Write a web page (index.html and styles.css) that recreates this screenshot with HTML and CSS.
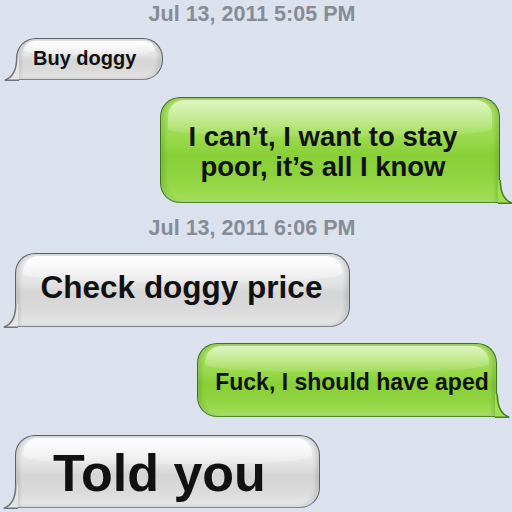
FILE: index.html
```html
<!DOCTYPE html>
<html>
<head>
<meta charset="utf-8">
<link rel="stylesheet" href="styles.css">
</head>
<body>
<div class="thread">
  <div class="stamp">Jul 13, 2011 5:05 PM</div>

  <div class="bubble gray b1">
    <span class="txt">Buy doggy</span>
    <svg class="tail tail-left" width="15" height="24" viewBox="0 0 15 24"><path class="tf" d="M12,0 C12,13 8,20 0.5,24 L15,24 L15,0 Z"/><path class="ts" d="M12.75,0 C12.75,13 8.5,20.5 0.75,23.25 L15,23.25"/></svg>
  </div>

  <div class="bubble green b2">
    <span class="txt">I can’t, I want to stay<br>poor, it’s all I know</span>
    <svg class="tail tail-right" width="15" height="24" viewBox="0 0 15 24"><path class="tf" d="M12,0 C12,13 8,20 0.5,24 L15,24 L15,0 Z"/><path class="ts" d="M12.75,0 C12.75,13 8.5,20.5 0.75,23.25 L15,23.25"/></svg>
  </div>

  <div class="stamp s2">Jul 13, 2011 6:06 PM</div>

  <div class="bubble gray b3">
    <span class="txt">Check doggy price</span>
    <svg class="tail tail-left" width="15" height="24" viewBox="0 0 15 24"><path class="tf" d="M12,0 C12,13 8,20 0.5,24 L15,24 L15,0 Z"/><path class="ts" d="M12.75,0 C12.75,13 8.5,20.5 0.75,23.25 L15,23.25"/></svg>
  </div>

  <div class="bubble green b4">
    <span class="txt">Fuck, I should have aped</span>
    <svg class="tail tail-right" width="15" height="24" viewBox="0 0 15 24"><path class="tf" d="M12,0 C12,13 8,20 0.5,24 L15,24 L15,0 Z"/><path class="ts" d="M12.75,0 C12.75,13 8.5,20.5 0.75,23.25 L15,23.25"/></svg>
  </div>

  <div class="bubble gray b5">
    <span class="txt">Told you</span>
    <svg class="tail tail-left" width="15" height="24" viewBox="0 0 15 24"><path class="tf" d="M12,0 C12,13 8,20 0.5,24 L15,24 L15,0 Z"/><path class="ts" d="M12.75,0 C12.75,13 8.5,20.5 0.75,23.25 L15,23.25"/></svg>
  </div>
</div>
</body>
</html>
```

FILE: styles.css
```css
html, body {
  margin: 0;
  padding: 0;
  background: #dbe2ed;
}
body {
  width: 512px;
  height: 512px;
  overflow: hidden;
  font-family: "Liberation Sans", Arial, Helvetica, sans-serif;
}
.thread {
  display: flex;
  flex-direction: column;
  align-items: flex-start;
}
.stamp {
  align-self: stretch;
  height: 28px;
  line-height: 28px;
  text-align: center;
  font-size: 21.5px;
  font-weight: bold;
  color: #868b95;
  padding-right: 8px;
}
.s2 {
  margin-top: 11px;
}
.bubble {
  position: relative;
  box-sizing: border-box;
  display: flex;
  align-items: center;
  border: 1.5px solid #5b5f66;
  border-bottom-color: #80848a;
  border-radius: 20px;
  color: #111;
  font-weight: bold;
}
.bubble::before {
  content: "";
  position: absolute;
  top: 2px;
  left: 7px;
  right: 7px;
  height: 36%;
  border-radius: 16px 16px 40% 40% / 16px 16px 8px 8px;
  pointer-events: none;
}
.txt {
  position: relative;
  white-space: nowrap;
}
.gray {
  background: linear-gradient(to bottom, #f3f3f3 0%, #e3e3e3 40%, #d5d5d5 55%, #d9d9d9 75%, #e6e6e6 100%);
  box-shadow: inset 3px 0 4px rgba(0,0,0,0.14), inset -3px 0 4px rgba(0,0,0,0.14), inset 0 -2px 3px rgba(255,255,255,0.6);
  border-bottom-left-radius: 0;
}
.gray::before {
  background: linear-gradient(to bottom, rgba(255,255,255,0.9), rgba(255,255,255,0.2));
}
.green {
  border-color: #3a7614;
  border-bottom-color: #4f8a25;
  background: linear-gradient(to bottom, #b2e56b 0%, #98d94a 40%, #88cf37 55%, #8ed33f 75%, #a3df56 100%);
  box-shadow: inset 3px 0 4px rgba(0,60,0,0.18), inset -3px 0 4px rgba(0,60,0,0.18), inset 0 -2px 3px rgba(255,255,255,0.35);
  border-bottom-right-radius: 0;
}
.green::before {
  background: linear-gradient(to bottom, rgba(255,255,255,0.6), rgba(255,255,255,0.08));
}
.tail {
  position: absolute;
  bottom: -1.5px;
  overflow: visible;
}
.tail-left {
  left: -13.5px;
}
.tail-right {
  right: -13.5px;
  transform: scaleX(-1);
}
.ts {
  fill: none;
  stroke-width: 1.5;
}
.gray .tf { fill: #e4e4e4; }
.gray .ts { stroke: #707479; }
.green .tf { fill: #a0de53; }
.green .ts { stroke: #467f1c; }

.b1 {
  margin-top: 10px;
  margin-left: 16px;
  width: 147px;
  height: 42px;
  font-size: 20px;
  padding-left: 16px;
  padding-bottom: 2px;
}
.b2 {
  margin-top: 17px;
  margin-left: 160px;
  width: 340px;
  height: 106px;
  font-size: 27.5px;
  line-height: 30px;
  justify-content: center;
  text-align: center;
  padding-right: 14px;
  padding-top: 4px;
}
.b3 {
  margin-top: 11px;
  margin-left: 15px;
  width: 335px;
  height: 74px;
  font-size: 31.5px;
  justify-content: center;
  padding-bottom: 6px;
  padding-right: 2px;
}
.b4 {
  margin-top: 16px;
  margin-left: 197px;
  width: 300px;
  height: 74px;
  font-size: 23px;
  justify-content: center;
  padding-left: 10px;
  padding-top: 4px;
}
.b5 {
  margin-top: 18px;
  margin-left: 15px;
  width: 305px;
  height: 73px;
  font-size: 52px;
  justify-content: center;
  padding-right: 16px;
  padding-top: 2px;
}
```
